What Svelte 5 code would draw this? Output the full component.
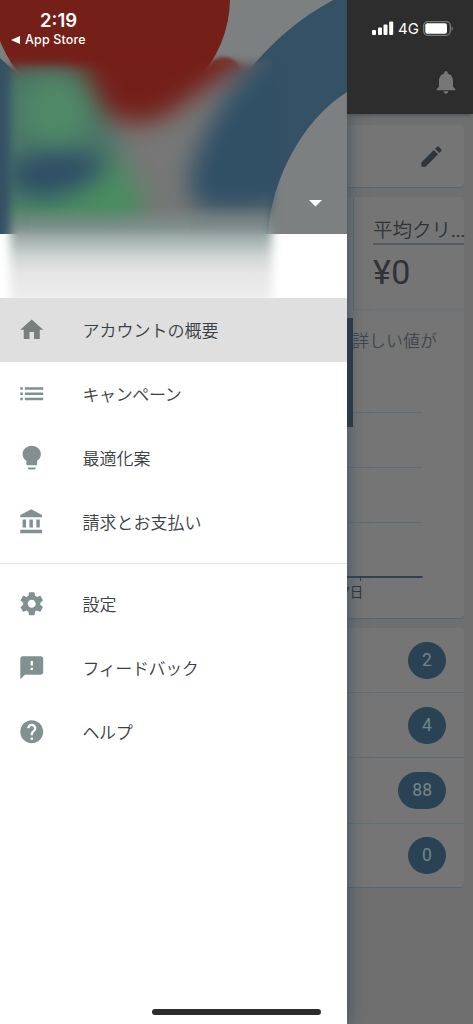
<script>
  const mainItems = [
    { label: "アカウントの概要", icon: "home", active: true },
    { label: "キャンペーン", icon: "list", kana: true },
    { label: "最適化案", icon: "bulb" },
    { label: "請求とお支払い", icon: "bank" },
  ];

  const moreItems = [
    { label: "設定", icon: "gear" },
    { label: "フィードバック", icon: "feedback", kana: true },
    { label: "ヘルプ", icon: "help", kana: true },
  ];

  const icons = {
    home: "M10 20v-6h4v6h5v-8h3L12 3 2 12h3v8z",
    list: "M2 17.7h2.2v-2.2H2zM2 8.5h2.2V6.300H2zM2 13.100h2.2v-2.200H2zM6 6.300v2.200h16V6.300zM6 17.700h16v-2.200H6zM6 13.100h16v-2.200H6z",
    bulb: "M8.600 21.200c0 .55.45 1 1 1h4.800c.55 0 1-.45 1-1v-.7H8.600zM12 1.500C7.500 1.500 4 4.700 4 8.800c0 2.500 1.300 4.600 3.300 5.900V17.600c0 .55.45 1 1 1h7.400c.55 0 1-.45 1-1v-2.900c2-1.300 3.300-3.400 3.300-5.900 0-4.100-3.500-7.300-8-7.300z",
    bank: "M4 10v7h3v-7zm6 0v7h3v-7zM2 22h19v-3H2zm14-12v7h3v-7zM11.5 1L2 6v2h19V6z",
    gear: "M19.43 12.98c.04-.32.07-.64.07-.98s-.03-.66-.07-.98l2.110-1.650c.19-.15.24-.42.12-.64l-2-3.460c-.12-.22-.39-.3-.61-.22l-2.490 1c-.52-.4-1.080-.73-1.690-.98l-.38-2.650C14.460 2.180 14.250 2 14 2h-4c-.25 0-.46.18-.49.42l-.38 2.650c-.61.25-1.170.59-1.690.98l-2.490-1c-.23-.09-.49 0-.61.22l-2 3.460c-.13.22-.07.49.12.64l2.110 1.650c-.04.32-.07.65-.07.98s.03.66.07.98l-2.110 1.650c-.19.15-.24.42-.12.64l2 3.460c.12.22.39.3.61.22l2.490-1c.52.4 1.080.73 1.690.98l.38 2.650c.03.24.24.42.49.42h4c.25 0 .46-.18.49-.42l.38-2.650c.61-.25 1.170-.59 1.690-.98l2.490 1c.23.09.49 0 .61-.22l2-3.460c.12-.22.07-.49-.12-.64zM12 15.500c-1.930 0-3.500-1.570-3.500-3.500s1.570-3.500 3.500-3.500 3.500 1.570 3.500 3.500-1.570 3.500-3.500 3.500z",
    feedback: "M20 2H4c-1.100 0-1.990.9-1.990 2L2 22l4-4h14c1.100 0 2-.9 2-2V4c0-1.100-.9-2-2-2zm-7 12h-2v-2h2zm0-4h-2V6h2z",
    help: "M12 2C6.480 2 2 6.480 2 12s4.480 10 10 10 10-4.480 10-10S17.520 2 12 2zm1 17h-2v-2h2zm2.070-7.750l-.9.920C13.450 12.900 13 13.500 13 15h-2v-.5c0-1.100.45-2.100 1.170-2.830l1.240-1.260c.37-.36.59-.86.59-1.410 0-1.100-.9-2-2-2s-2 .9-2 2H8c0-2.210 1.790-4 4-4s4 1.790 4 4c0 .88-.36 1.680-.93 2.250z",
  };

  const counts = [2, 4, 88, 0];
</script>

{#snippet menu(items)}
  <ul>
    {#each items as item}
      <li class:active={item.active}>
        <svg class="icon" viewBox="0 0 24 24"><path d={icons[item.icon]} /></svg>
        <span class:kana={item.kana}>{item.label}</span>
      </li>
    {/each}
  </ul>
{/snippet}

<div class="screen">
  <aside class="drawer">
    <div class="profile">
      <svg class="cover" width="347" height="298" viewBox="0 0 347 298">
        <defs>
          <filter id="blur" x="-30%" y="-30%" width="160%" height="160%" color-interpolation-filters="sRGB">
            <feGaussianBlur stdDeviation="12" />
          </filter>
          <filter id="soft" x="-30%" y="-30%" width="160%" height="160%" color-interpolation-filters="sRGB">
            <feGaussianBlur stdDeviation="5" />
          </filter>
          <filter id="slight" x="-30%" y="-30%" width="160%" height="160%">
            <feGaussianBlur stdDeviation="1.500" />
          </filter>
          <linearGradient id="fade" x1="0" y1="0" x2="0" y2="1">
            <stop offset="0" stop-color="#7b8b89" stop-opacity="0" />
            <stop offset="0.22" stop-color="#82918e" stop-opacity="0.85" />
            <stop offset="0.36" stop-color="#a3b0ad" />
            <stop offset="0.55" stop-color="#d0d5d4" />
            <stop offset="0.72" stop-color="#e5e5e5" />
            <stop offset="1" stop-color="#eeeeee" />
          </linearGradient>
          <mask id="haze">
            <rect x="10" y="63" width="262" height="260" fill="#fff" filter="url(#soft)" />
          </mask>
          <clipPath id="banner"><rect width="347" height="234" /></clipPath>
        </defs>
        <rect width="347" height="298" fill="#fff" />
        <g clip-path="url(#banner)">
          <rect width="347" height="234" fill="#7c8080" />
          <path d="M0 58L30 85V234H0z" fill="#345165" />
          <circle cx="111" cy="-2" r="119" fill="#751f19" />
          <path
            d="M333 0C300 18 276 39 256 62C220 105 196 160 190 234H268C271 180 303 119 347 92V0z"
            fill="#345165"
          />
          <circle cx="224" cy="74" r="17" fill="#7a3b35" filter="url(#slight)" />
        </g>
        <g mask="url(#haze)">
          <g filter="url(#blur)">
            <rect x="-20" y="20" width="320" height="220" fill="#767776" />
            <path d="M-10 50H75L98 90L136 190L136 240H-10z" fill="#4a7668" />
            <path d="M-10 0H245V60L180 106Q145 134 108 115L82 66L50 60L-10 66z" fill="#751f19" />
            <ellipse cx="56" cy="112" rx="33" ry="36" fill="#4f8967" />
            <ellipse cx="60" cy="175" rx="52" ry="24" fill="#2e4e66" />
            <path d="M-10 205Q90 205 118 152L148 205L130 228H-10z" fill="#4b8c62" />
            <path d="M262 55H320V190L266 210H202Q182 194 194 160Q212 105 262 55z" fill="#305066" />
          </g>
          <rect x="0" y="206" width="295" height="92" fill="url(#fade)" />
        </g>
        <path d="M309 200h13l-6.500 6.500z" fill="#fff" />
      </svg>
    </div>
    <nav>
      {@render menu(mainItems)}
      <hr />
      {@render menu(moreItems)}
    </nav>
  </aside>

  <main>
    <header>
      <svg class="bell" viewBox="0 0 24 24">
        <path
          d="M12 22c1.100 0 2-.9 2-2h-4c0 1.100.89 2 2 2zm6-6v-5c0-3.070-1.640-5.640-4.500-6.320V4c0-.83-.67-1.500-1.500-1.500s-1.500.67-1.500 1.500v.68C7.630 5.360 6 7.920 6 11v5l-2 2v1h16v-1z"
        />
      </svg>
    </header>
    <section class="card edit">
      <svg class="pencil" viewBox="0 0 24 24">
        <path
          d="M3 17.250V21h3.750L17.810 9.940l-3.750-3.750zM20.710 7.040c.39-.39.39-1.020 0-1.410l-2.340-2.340c-.39-.39-1.020-.39-1.410 0l-1.830 1.830 3.750 3.750z"
        />
      </svg>
    </section>
    <section class="card report">
      <div class="metric">
        <div class="metric-name">平均クリ<span class="dots">...</span></div>
        <div class="metric-value">¥0</div>
      </div>
      <div class="chart">
        <p class="hint">詳しい値が</p>
        <svg width="116" height="309" viewBox="0 0 116 309">
          <rect x="0" y="8" width="6" height="109" fill="#2a3942" />
          <path d="M6 102.500H75M0 157.500H75M0 212.500H75" stroke="#5c6d75" />
          <path d="M0 267H75.500" stroke="#2c4351" stroke-width="2" />
          <path d="M13.500 268v3" stroke="#2c4351" />
          <text x="-5" y="286.500">7日</text>
        </svg>
      </div>
    </section>
    <section class="card counts">
      {#each counts as count}
        <div class="row"><span class="badge">{count}</span></div>
      {/each}
    </section>
  </main>

  <div class="status">
    <div class="clock">
      <div class="time">2:19</div>
      <div class="back">
        <svg width="9" height="8" viewBox="0 0 9 8"><path d="M0 4L9 0v8z" /></svg>
        App Store
      </div>
    </div>
    <div class="signal">
      <svg width="22" height="14" viewBox="0 0 22 14">
        <rect x="0" y="9" width="4" height="5" rx="1" />
        <rect x="6" y="6.500" width="4" height="7.500" rx="1" />
        <rect x="11.500" y="3.500" width="4" height="10.500" rx="1" />
        <rect x="17.200" y="0.500" width="4" height="13.500" rx="1" />
      </svg>
      <span>4G</span>
      <svg width="31" height="15" viewBox="0 0 31 15">
        <rect x="0.700" y="0.700" width="26.600" height="13.600" rx="4" fill="none" stroke="#757b7b" stroke-width="1.300" />
        <rect x="2.300" y="2.300" width="21.700" height="10.400" rx="2" />
        <path d="M28.500 5.200q3 2.300 0 4.600z" fill="#757b7b" />
      </svg>
    </div>
  </div>
  <div class="home-bar"></div>
</div>

<style>
  :global(body) {
    margin: 0;
  }
  .screen {
    position: relative;
    display: grid;
    grid-template-columns: 347px 126px;
    width: 473px;
    height: 1024px;
    overflow: hidden;
    background: #6f6f6f;
    font-family: Inter, "Noto Sans CJK JP", sans-serif;
  }
  svg {
    display: block;
    flex-shrink: 0;
  }

  .drawer {
    z-index: 1;
    background: #fff;
    box-shadow: 0 0 16px rgba(45, 70, 85, 0.75);
  }
  .profile {
    height: 298px;
  }
  ul {
    margin: 0;
    padding: 0;
    list-style: none;
  }
  li {
    display: flex;
    align-items: center;
    box-sizing: border-box;
    height: 64px;
    padding-left: 18px;
    gap: 37.500px;
    color: #394145;
    font-family: "Noto Sans CJK JP", sans-serif;
    font-size: 17px;
    font-weight: 350;
    line-height: 24px;
  }
  li span {
    padding-bottom: 1px;
  }
  li.active {
    background: #dfdfdf;
  }
  .kana {
    letter-spacing: -0.4px;
  }
  .icon {
    width: 27.500px;
    height: 27.500px;
    margin-right: -0.500px;
    fill: #819090;
  }
  .active .icon {
    fill: #7a7e7e;
  }
  hr {
    height: 1px;
    margin: 9px 0 8px;
    border: 0;
    background: #e2e4e4;
  }

  main {
    display: flex;
    flex-direction: column;
    min-width: 0;
  }
  /* keeps the drawer's shadow off the dark bar */
  header {
    position: relative;
    z-index: 2;
    display: flex;
    justify-content: flex-end;
    box-sizing: border-box;
    height: 114px;
    padding: 68px 13px 0 0;
    background: #2d2d2d;
    box-shadow: 0 3px 4px -2px #3e4d56;
  }
  .bell {
    width: 28px;
    height: 28px;
    fill: #777;
  }
  .card {
    box-sizing: border-box;
    margin-right: 9px;
    border-radius: 0 4px 4px 0;
    background: #757575;
    box-shadow: 0 1px 1px #536773;
  }
  .edit {
    display: flex;
    align-items: center;
    justify-content: flex-end;
    height: 62px;
    margin-top: 11px;
    padding-right: 19px;
  }
  .pencil {
    width: 27px;
    height: 27px;
    fill: #2e363b;
  }
  .report {
    height: 421px;
    margin-top: 10px;
  }
  .metric {
    box-sizing: border-box;
    height: 113px;
    margin-left: 6px;
    padding: 18px 0 0 19px;
    border-left: 1px solid #5c6a71;
    border-bottom: 1px solid #62747c;
    color: #2f3335;
  }
  .metric-name {
    height: 28px;
    border-bottom: 2px solid #535c61;
    font-family: "Noto Sans CJK JP", sans-serif;
    font-size: 19.500px;
    font-weight: 350;
    line-height: 28px;
    white-space: nowrap;
  }
  .dots {
    font-family: Roboto, sans-serif;
    font-size: 17px;
    font-weight: 500;
  }
  .metric-value {
    margin-top: 9px;
    font-family: Roboto, sans-serif;
    font-size: 34px;
    letter-spacing: 0.5px;
    line-height: 36px;
  }
  .chart {
    display: grid;
  }
  .chart > * {
    grid-area: 1 / 1;
  }
  .hint {
    margin: 17px 0 0 5px;
    color: #3d474d;
    font-family: "Noto Sans CJK JP", sans-serif;
    font-size: 17px;
    font-weight: 350;
    line-height: 26px;
    white-space: nowrap;
  }
  .chart text {
    fill: #2e3437;
    font-size: 13.500px;
  }
  .counts {
    height: 259px;
    margin-top: 10px;
  }
  .row {
    display: flex;
    align-items: center;
    justify-content: flex-end;
    box-sizing: border-box;
    height: 65.200px;
    padding-right: 18px;
    border-bottom: 1px solid #5c6e76;
  }
  .row:last-child {
    border-bottom: 0;
    height: 63px;
  }
  .badge {
    box-sizing: border-box;
    min-width: 38px;
    height: 37px;
    padding: 0 14px;
    border-radius: 19px;
    background: #2a4354;
    color: #76848b;
    font-family: Roboto, sans-serif;
    font-size: 17.500px;
    line-height: 36px;
    text-align: center;
  }

  /* phone chrome lies over both the drawer and the page */
  .status {
    position: absolute;
    z-index: 3;
    top: 0;
    right: 0;
    left: 0;
    display: flex;
    justify-content: space-between;
    padding: 9px 19px 0 11px;
    color: #fff;
    fill: #fff;
  }
  .time {
    padding-left: 29px;
    font-size: 18.500px;
    font-weight: 600;
    line-height: 22px;
  }
  .back {
    display: flex;
    align-items: center;
    gap: 5px;
    font-size: 12.500px;
    font-weight: 500;
    letter-spacing: 0.15px;
    line-height: 17px;
  }
  .signal {
    display: flex;
    align-items: center;
    gap: 4px;
    height: 38px;
    font-size: 15px;
    font-weight: 400;
  }
  .home-bar {
    position: absolute;
    z-index: 3;
    bottom: 9px;
    left: 152px;
    width: 169px;
    height: 6px;
    border-radius: 3px;
    background: #2d2d2d;
  }
</style>
